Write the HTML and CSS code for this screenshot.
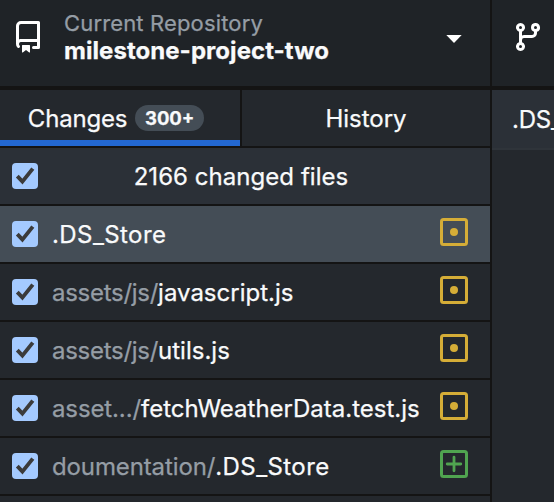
FILE: index.html
```html
<!DOCTYPE html>
<html lang="en">
<head>
<meta charset="utf-8">
<title>milestone-project-two</title>
<link rel="stylesheet" href="styles.css">
</head>
<body>
<svg class="defs" width="0" height="0" aria-hidden="true">
  <symbol id="check" viewBox="0 0 26 26"><path d="M5.3 13.2 10.4 18.6 20.8 5.6" fill="none" stroke="#3b3b3b" stroke-width="3.9"/></symbol>
  <symbol id="modified" viewBox="0 0 28 28"><rect x="1.5" y="1.5" width="25" height="25" rx="2" fill="none" stroke="currentColor" stroke-width="3"/><circle cx="14" cy="14" r="4" fill="currentColor"/></symbol>
  <symbol id="added" viewBox="0 0 28 28"><rect x="1.5" y="1.5" width="25" height="25" rx="2" fill="none" stroke="currentColor" stroke-width="3"/><path d="M14 7.2v13.6M7.2 14h13.6" stroke="currentColor" stroke-width="2.8" stroke-linecap="round"/></symbol>
</svg>
<div class="app">
  <header class="toolbar">
    <div class="repo">
      <svg class="icon" viewBox="0 0 16 16"><path fill-rule="evenodd" d="M2 2.5A2.5 2.5 0 014.5 0h8.75a.75.75 0 01.75.75v12.5a.75.75 0 01-.75.75h-2.5a.75.75 0 110-1.5h1.75v-2h-8a1 1 0 00-.714 1.7.75.75 0 01-1.072 1.05A2.495 2.495 0 012 11.5v-9zm10.5-1V9h-8c-.356 0-.694.074-1 .208V2.5a1 1 0 011-1h8zM5 12.25v3.25a.25.25 0 00.4.2l1.45-1.087a.25.25 0 01.3 0L8.6 15.7a.25.25 0 00.4-.2v-3.25a.25.25 0 00-.25-.25h-3.5a.25.25 0 00-.25.25z"/></svg>
      <div class="titles">
        <span class="label">Current Repository</span>
        <span class="name">milestone-project-two</span>
      </div>
      <svg class="caret" viewBox="0 0 16 8"><path d="M.3 0h15.4L8 8z"/></svg>
    </div>
    <div class="branch">
      <svg class="icon" viewBox="0 0 16 16"><path fill-rule="evenodd" d="M11.75 2.5a.75.75 0 100 1.5.75.75 0 000-1.5zm-2.25.75a2.25 2.25 0 113 2.122V6A2.5 2.5 0 0110 8.5H6a1 1 0 00-1 1v1.128a2.251 2.251 0 11-1.5 0V5.372a2.25 2.25 0 111.5 0v1.836A2.492 2.492 0 016 7h4a1 1 0 001-1v-.628A2.25 2.25 0 019.5 3.25zM4.25 12a.75.75 0 100 1.5.75.75 0 000-1.5zM3.5 3.25a.75.75 0 111.5 0 .75.75 0 01-1.5 0z"/></svg>
    </div>
  </header>
  <main class="content">
    <section class="sidebar">
      <nav class="tabs">
        <div class="tab active"><span class="title">Changes</span><span class="badge">300+</span></div>
        <div class="tab"><span>History</span></div>
      </nav>
      <div class="row summary"><svg class="box"><use href="#check"/></svg><span class="count">2166 changed files</span></div>
      <div class="row selected"><svg class="box"><use href="#check"/></svg><span class="path"><span class="file store">.DS_Store</span></span><svg class="status modified"><use href="#modified"/></svg></div>
      <div class="row"><svg class="box"><use href="#check"/></svg><span class="path"><span class="dir">assets/js/</span><span class="file">javascript.js</span></span><svg class="status modified"><use href="#modified"/></svg></div>
      <div class="row"><svg class="box"><use href="#check"/></svg><span class="path"><span class="dir">assets/js/</span><span class="file">utils.js</span></span><svg class="status modified"><use href="#modified"/></svg></div>
      <div class="row"><svg class="box"><use href="#check"/></svg><span class="path"><span class="dir long">asset.../</span><span class="file">fetchWeatherData.test.js</span></span><svg class="status modified"><use href="#modified"/></svg></div>
      <div class="row"><svg class="box"><use href="#check"/></svg><span class="path"><span class="dir long">doumentation/</span><span class="file store">.DS_Store</span></span><svg class="status added"><use href="#added"/></svg></div>
    </section>
    <section class="diff"><div class="diff-header">.DS_Store</div></section>
  </main>
</div>
</body>
</html>
```
FILE: styles.css
```css
* { box-sizing: border-box; }
body {
  margin: 0;
  background: #24282d;
  color: #f9fafb;
  font: 24px/28px Inter, "Liberation Sans", sans-serif;
  -webkit-text-stroke: 0.25px currentColor;
}
.defs { display: none; }
.app {
  width: 554px;
  height: 502px;
  display: flex;
  flex-direction: column;
  overflow: hidden;
}
.toolbar {
  flex: none;
  display: flex;
  height: 90px;
  background: #1f2327;
  border-bottom: 4px solid #141414;
}
.repo {
  width: 492px;
  flex: none;
  display: flex;
  align-items: flex-start;
  padding: 10px 28px 0 12px;
  border-right: 2px solid #141414;
}
.icon { flex: none; width: 32px; height: 32px; margin-top: 11px; fill: #fff; }
.titles { flex: 1; display: flex; flex-direction: column; margin-left: 20px; white-space: nowrap; }
.label { font-size: 22px; line-height: 26px; color: #959da5; letter-spacing: 0.15px; }
.name { font-weight: 700; line-height: 30px; letter-spacing: 0.05px; }
.caret { width: 16px; height: 8px; margin-top: 25px; fill: #fff; }
.branch { flex: none; padding: 10px 0 0 20px; }
.content { flex: 1; display: flex; min-height: 0; }
.sidebar { flex: none; width: 492px; border-right: 2px solid #141414; }
.tabs { display: flex; height: 58px; border-bottom: 2px solid #141414; }
.tab { flex: 1; display: flex; align-items: center; justify-content: center; padding-top: 2px; }
.tab.active {
  flex: none;
  width: 242px;
  padding: 2px 8px 0 0;
  border-right: 2px solid #141414;
  box-shadow: inset 0 -6px #2368d2;
}
.title { letter-spacing: -0.2px; }
.badge {
  width: 69px;
  height: 26px;
  margin: -2px 0 0 8px;
  border-radius: 13px;
  background: #444d56;
  font-size: 18.5px;
  font-weight: 700;
  line-height: 27px;
  text-align: center;
}
.row {
  display: flex;
  height: 58px;
  align-items: flex-start;
  padding: 0 22px 0 12px;
  border-bottom: 2px solid #141414;
  line-height: 58px;
  white-space: nowrap;
}
.summary { background: #2b3037; }
.selected { background: #444d56; }
.box { flex: none; width: 26px; height: 26px; margin-top: 15px; border-radius: 4px; background: #a4caff; }
.count { flex: 1; padding-right: 24px; text-align: center; letter-spacing: 0.05px; }
.path { flex: 1; height: 56px; margin-left: 14px; }
.dir { color: #959da5; letter-spacing: -0.28px; }
.dir.long { letter-spacing: -0.12px; }
.file { letter-spacing: 0; }
.file.store { letter-spacing: 0.42px; }
.status { flex: none; width: 28px; height: 28px; margin-top: 12px; }
.modified { color: #d5ad37; }
.added { color: #50a450; }
.diff { flex: 1; min-width: 0; overflow: hidden; }
.diff-header {
  height: 60px;
  padding-left: 20px;
  background: #2b3037;
  border-bottom: 2px solid #2f343a;
  line-height: 60px;
  letter-spacing: -0.2px;
  white-space: nowrap;
}
```
